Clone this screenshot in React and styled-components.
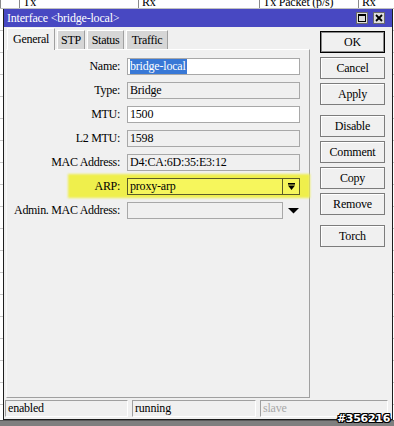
import React from "react";
import styled, { createGlobalStyle } from "styled-components";

const GlobalStyle = createGlobalStyle`
  html, body {
    margin: 0;
    padding: 0;
  }
  body {
    width: 394px;
    height: 426px;
    overflow: hidden;
    font-family: "Liberation Serif", serif;
    background: #ffffff;
  }
  * {
    box-sizing: border-box;
  }
`;

const Desktop = styled.div`
  position: relative;
  width: 394px;
  height: 426px;
  display: flex;
  flex-direction: column;
  overflow: hidden;
`;

const HeaderStrip = styled.div`
  display: grid;
  grid-template-columns: 19px 119px 121px 99px 1fr;
  height: 9px;
  background: #ffffff;
  border-bottom: 1px solid #c0c0c0;
`;

const HeaderCell = styled.div`
  overflow: hidden;
  border-left: 1px solid #8a8a8a;
  padding-left: 3px;
  font-size: 12px;
  line-height: 12px;
  letter-spacing: -0.2px;
  color: #000;

  span {
    display: block;
    margin-top: -4px;
  }
`;

const Rows = styled.div`
  flex: 1;
  background: repeating-linear-gradient(
    to bottom,
    #ffffff 0,
    #ffffff 21px,
    #c8c8c8 21px,
    #c8c8c8 22px
  );
`;

const Taskbar = styled.div`
  height: 6px;
  background: #7f7f7f;
  border-top: 1px solid #5a5a5a;
`;

const Window = styled.div`
  position: absolute;
  left: 3px;
  top: 9px;
  width: 390px;
  height: 411px;
  display: flex;
  flex-direction: column;
  background: #f0f0f0;
  border: 1px solid #1e1e1e;
  border-top: none;
`;

const TitleBar = styled.div`
  height: 18px;
  display: flex;
  align-items: center;
  justify-content: space-between;
  padding: 0 7px 0 3px;
  background: #4848c2;
  color: #ffffff;
  font-size: 12px;
  letter-spacing: -0.2px;
`;

const TitleButtons = styled.div`
  display: flex;
  gap: 5px;
`;

const TitleButton = styled.div`
  width: 12px;
  height: 12px;
  display: flex;
  align-items: center;
  justify-content: center;
  background: #dcdcdc;
  border: 1px solid #6a6a6a;
`;

const Body = styled.div`
  flex: 1;
  display: flex;
  gap: 10px;
  padding: 1px 7px 0 2px;
`;

const LeftColumn = styled.div`
  width: 304px;
  display: flex;
  flex-direction: column;
`;

const TabStrip = styled.div`
  height: 21px;
  display: flex;
  align-items: flex-end;
  gap: 2px;
  padding-left: 1px;
`;

const Tab = styled.div`
  width: ${(p) => p.width}px;
  height: ${(p) => (p.active ? 22 : 19)}px;
  margin-bottom: ${(p) => (p.active ? -1 : 0)}px;
  position: relative;
  z-index: ${(p) => (p.active ? 2 : 1)};
  display: flex;
  justify-content: center;
  align-items: ${(p) => (p.active ? "flex-start" : "center")};
  padding-top: ${(p) => (p.active ? 3 : 0)}px;
  background: ${(p) => (p.active ? "#f0f0f0" : "#d6d6d6")};
  border-top: 1px solid #ffffff;
  border-left: 1px solid #ffffff;
  border-right: 1px solid #a0a0a0;
  font-size: 12px;
  letter-spacing: -0.3px;
  color: #000;
`;

const Panel = styled.div`
  flex: 1;
  position: relative;
  z-index: 1;
  display: flex;
  flex-direction: column;
  gap: 7px;
  padding-top: 8px;
  border-top: 1px solid #ffffff;
  border-left: 1px solid #fafafa;
  border-right: 1px solid #a0a0a0;
  border-bottom: 1px solid #a0a0a0;
`;

const Row = styled.div`
  position: relative;
  height: 17px;
  display: flex;
  align-items: center;

  &::before {
    content: "";
    display: ${(p) => (p.highlight ? "block" : "none")};
    position: absolute;
    left: 61px;
    right: -1px;
    top: -4px;
    bottom: -3px;
    background: #efef4c;
    filter: blur(1px);
  }
`;

const Label = styled.div`
  position: relative;
  width: 113px;
  margin-right: 7px;
  text-align: right;
  font-size: 12px;
  letter-spacing: -0.3px;
  color: #000;
`;

const Field = styled.div`
  position: relative;
  width: ${(p) => p.width || 173}px;
  height: 17px;
  display: flex;
  align-items: center;
  padding-left: 2px;
  background: ${(p) =>
    p.yellow ? "#f6f65c" : p.readOnly ? "#f0f0f0" : "#ffffff"};
  border: 1px solid ${(p) => (p.yellow ? "#5c5c28" : "#a8a8a8")};
  font-size: 12px;
  letter-spacing: -0.2px;
  color: #000;
  white-space: nowrap;
`;

const Selected = styled.span`
  background: #3878d6;
  color: #ffffff;
  padding-right: 1px;
`;

const FieldText = styled.span`
  flex: 1;
`;

const DropButton = styled.div`
  width: 17px;
  height: 15px;
  display: flex;
  align-items: center;
  justify-content: center;
  border-left: 1px solid #5c5c28;
`;

const Arrow = styled.div`
  position: relative;
  margin-left: 5px;
  display: flex;
`;

const ButtonColumn = styled.div`
  width: 65px;
  display: flex;
  flex-direction: column;
  padding-top: 3px;
`;

const Button = styled.div`
  height: 22px;
  margin-top: ${(p) => (p.groupStart ? 10 : 4)}px;
  &:first-child {
    margin-top: 0;
  }
  display: flex;
  align-items: center;
  justify-content: center;
  background: #f0f0f0;
  border: 1px solid ${(p) => (p.primary ? "#000000" : "#7c7c7c")};
  box-shadow: ${(p) =>
    p.primary ? "inset 0 0 0 1px #8a8a8a" : "inset 1px 1px 0 #ffffff"};
  font-size: 12px;
  letter-spacing: -0.2px;
  color: #000;
`;

const StatusBar = styled.div`
  display: grid;
  grid-template-columns: 123px 124px 128px;
  column-gap: 4px;
  padding: 2px 0 2px 1px;
`;

const StatusCell = styled.div`
  height: 17px;
  display: flex;
  align-items: center;
  padding-left: 2px;
  border-top: 1px solid #a0a0a0;
  border-left: 1px solid #a0a0a0;
  border-bottom: 1px solid #ffffff;
  border-right: 1px solid #ffffff;
  font-size: 12px;
  letter-spacing: -0.2px;
  color: ${(p) => (p.dim ? "#a8a8a8" : "#000")};
`;

const Watermark = styled.div`
  position: absolute;
  right: 4px;
  bottom: 1px;
  font-family: "DejaVu Sans", sans-serif;
  font-weight: bold;
  font-size: 11px;
  letter-spacing: -0.3px;
  color: #ffffff;
  text-shadow: 1px 0 #000, -1px 0 #000, 0 1px #000, 0 -1px #000,
    1px 1px #000, -1px -1px #000, 1px -1px #000, -1px 1px #000;
`;

const tabs = [
  { name: "General", width: 48, active: true },
  { name: "STP", width: 28 },
  { name: "Status", width: 37 },
  { name: "Traffic", width: 42 },
];

const buttons = [
  { name: "OK", primary: true },
  { name: "Cancel" },
  { name: "Apply" },
  { name: "Disable", groupStart: true },
  { name: "Comment" },
  { name: "Copy" },
  { name: "Remove" },
  { name: "Torch", groupStart: true },
];

const DropIcon = () => (
  <svg width="9" height="9" viewBox="0 0 9 9">
    <rect x="1" y="1" width="7" height="1.6" fill="#000" />
    <polygon points="1,3.5 8,3.5 4.5,8" fill="#000" />
  </svg>
);

const App = () => {
  return (
    <Desktop>
      <GlobalStyle />
      <HeaderStrip>
        <HeaderCell />
        <HeaderCell>
          <span>Tx</span>
        </HeaderCell>
        <HeaderCell>
          <span>Rx</span>
        </HeaderCell>
        <HeaderCell>
          <span>Tx Packet (p/s)</span>
        </HeaderCell>
        <HeaderCell>
          <span>Rx Packet</span>
        </HeaderCell>
      </HeaderStrip>
      <Rows />
      <Taskbar />

      <Window>
        <TitleBar>
          <span>Interface &lt;bridge-local&gt;</span>
          <TitleButtons>
            <TitleButton>
              <svg width="8" height="8" viewBox="0 0 8 8">
                <rect x="0.5" y="0.5" width="7" height="7" fill="none" stroke="#000" />
                <rect x="0" y="0" width="8" height="2" fill="#000" />
              </svg>
            </TitleButton>
            <TitleButton>
              <svg width="8" height="8" viewBox="0 0 8 8">
                <path d="M1 1 L7 7 M7 1 L1 7" stroke="#000" strokeWidth="1.8" />
              </svg>
            </TitleButton>
          </TitleButtons>
        </TitleBar>

        <Body>
          <LeftColumn>
            <TabStrip>
              {tabs.map((t) => (
                <Tab key={t.name} width={t.width} active={t.active}>
                  {t.name}
                </Tab>
              ))}
            </TabStrip>
            <Panel>
              <Row>
                <Label>Name:</Label>
                <Field>
                  <Selected>bridge-local</Selected>
                </Field>
              </Row>
              <Row>
                <Label>Type:</Label>
                <Field readOnly>Bridge</Field>
              </Row>
              <Row>
                <Label>MTU:</Label>
                <Field>1500</Field>
              </Row>
              <Row>
                <Label>L2 MTU:</Label>
                <Field readOnly>1598</Field>
              </Row>
              <Row>
                <Label>MAC Address:</Label>
                <Field readOnly>D4:CA:6D:35:E3:12</Field>
              </Row>
              <Row highlight>
                <Label>ARP:</Label>
                <Field yellow>
                  <FieldText>proxy-arp</FieldText>
                  <DropButton>
                    <DropIcon />
                  </DropButton>
                </Field>
              </Row>
              <Row>
                <Label>Admin. MAC Address:</Label>
                <Field readOnly width={156} />
                <Arrow>
                  <svg width="11" height="6" viewBox="0 0 11 6">
                    <polygon points="0,0 11,0 5.5,5.5" fill="#000" />
                  </svg>
                </Arrow>
              </Row>
            </Panel>
          </LeftColumn>

          <ButtonColumn>
            {buttons.map((b) => (
              <Button key={b.name} primary={b.primary} groupStart={b.groupStart}>
                {b.name}
              </Button>
            ))}
          </ButtonColumn>
        </Body>

        <StatusBar>
          <StatusCell>enabled</StatusCell>
          <StatusCell>running</StatusCell>
          <StatusCell dim>slave</StatusCell>
        </StatusBar>
      </Window>

      <Watermark>#356216</Watermark>
    </Desktop>
  );
};

export default App;
